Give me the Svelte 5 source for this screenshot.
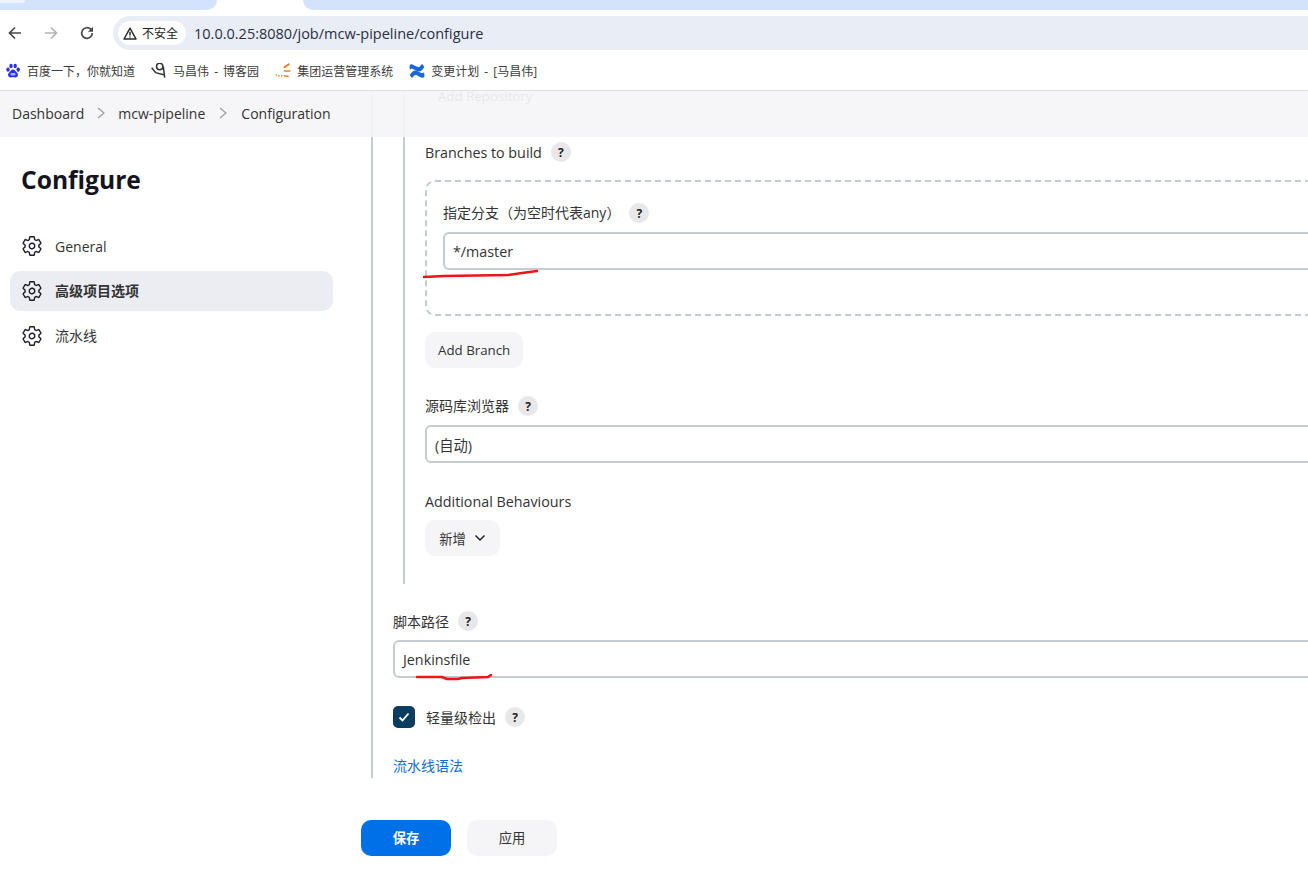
<script>
  const gear =
    "M262.29 192.31a64 64 0 1057.4 57.4 64.13 64.13 0 00-57.4-57.4zM416.39 256a154.34 154.34 0 01-1.53 20.79l45.21 35.46a10.81 10.81 0 012.45 13.75l-42.77 74a10.81 10.81 0 01-13.14 4.59l-44.9-18.08a16.11 16.11 0 00-15.17 1.75A164.48 164.48 0 01325 400.8a15.94 15.94 0 00-8.82 12.14l-6.73 47.89a11.08 11.08 0 01-10.68 9.17h-85.54a11.11 11.11 0 01-10.69-8.87l-6.72-47.82a16.07 16.07 0 00-9-12.22 155.3 155.3 0 01-21.46-12.57 16 16 0 00-15.11-1.71l-44.89 18.07a10.81 10.81 0 01-13.14-4.58l-42.77-74a10.8 10.8 0 012.45-13.75l38.21-30a16.05 16.05 0 006-14.08c-.36-4.17-.58-8.33-.58-12.5s.21-8.27.58-12.35a16 16 0 00-6.07-13.94l-38.19-30A10.81 10.81 0 0149.48 186l42.77-74a10.81 10.81 0 0113.14-4.59l44.9 18.08a16.11 16.11 0 0015.17-1.75A164.48 164.48 0 01187 111.2a15.94 15.94 0 008.82-12.14l6.73-47.89A11.08 11.08 0 01213.23 42h85.54a11.11 11.11 0 0110.69 8.87l6.72 47.82a16.07 16.07 0 009 12.22 155.3 155.3 0 0121.46 12.57 16 16 0 0015.11 1.71l44.89-18.07a10.81 10.81 0 0113.14 4.58l42.77 74a10.8 10.8 0 01-2.45 13.75l-38.21 30a16.05 16.05 0 00-6.07 14.08c.33 4.14.55 8.3.55 12.47z";

  const navItems = [
    { label: "General", active: false, cjk: false },
    { label: "高级项目选项", active: true, cjk: true },
    { label: "流水线", active: false, cjk: true }
  ];
</script>

<div class="page">
  <div class="tabstrip">
    <div class="tab-left"><span class="tab-nub"></span></div>
    <div class="tab-current"></div>
    <div class="tab-right"></div>
  </div>

  <div class="toolbar">
    <svg class="tool" viewBox="0 0 16 16" fill="none" stroke="#474747" stroke-width="1.7">
      <path d="M14 8H3M8 2.500 2.500 8 8 13.500" />
    </svg>
    <svg class="tool" viewBox="0 0 16 16" fill="none" stroke="#b4b4b4" stroke-width="1.7">
      <path d="M2 8h11M8 2.500 13.500 8 8 13.500" />
    </svg>
    <svg class="tool" viewBox="0 0 16 16" fill="none" stroke="#474747" stroke-width="1.7">
      <path d="M13.300 8a5.300 5.300 0 1 1-1.600-3.800L13 5.600" />
      <path d="M14 1.800V6.800H9Z" fill="#474747" stroke="none" />
    </svg>
    <div class="omnibox">
      <div class="chip">
        <svg width="14" height="13" viewBox="0 0 14 13" fill="none" stroke="#2b2b2b" stroke-width="1.500">
          <path d="M7 1.200 13 12H1Z" stroke-linejoin="round" />
          <path d="M7 4.800v3.800M7 9.400v1.200" />
        </svg>
        <span>不安全</span>
      </div>
      <span class="url">10.0.0.25:8080/job/mcw-pipeline/configure</span>
    </div>
  </div>

  <div class="bookmarks">
    <div class="bookmark">
      <svg width="16" height="16" viewBox="0 0 16 16" fill="#2932e1">
        <ellipse cx="3" cy="6.600" rx="1.700" ry="2.200" />
        <ellipse cx="6" cy="3" rx="1.700" ry="2.300" />
        <ellipse cx="10.200" cy="3" rx="1.700" ry="2.300" />
        <ellipse cx="13.200" cy="6.600" rx="1.700" ry="2.200" />
        <path d="M8 6.600c-2 0-2.600 2-4 3.200-1.500 1.300-1.200 4.600 1.600 4.600 1 0 1.600-.3 2.400-.3s1.500.3 2.500.3c2.800 0 3-3.300 1.500-4.600C10.600 8.600 10 6.600 8 6.600Z" />
        <rect x="5.500" y="10" width="5" height="2.600" rx="1" fill="#aab0f5" />
      </svg>
      <span>百度一下，你就知道</span>
    </div>
    <div class="bookmark">
      <svg width="16" height="16" viewBox="0 1 16 16" fill="none" stroke="#333" stroke-width="1.500">
        <circle cx="8.700" cy="4.500" r="3.200" />
        <path d="M.7 5.700 4.700 10.700 13.700 13M12.300 4.500 13.700 15.700" />
      </svg>
      <span>马昌伟 - 博客园</span>
    </div>
    <div class="bookmark">
      <svg width="16" height="16" viewBox="0 0 17 16" fill="none" stroke="#f27a1a" stroke-linecap="round">
        <path d="M10 4 14.700 .8" stroke-width="2" />
        <path d="M10 8H15.700" stroke-width="1.700" />
        <path d="M10 13 14 13.700" stroke-width="1.500" />
        <path d="M1.300 12.300h.3M4 13h.3M7 13h.3" stroke-width="1.500" />
      </svg>
      <span>集团运营管理系统</span>
    </div>
    <div class="bookmark">
      <svg width="16" height="16" viewBox="0 0 17 16" fill="#1868db">
        <path d="M.7 12.300c2.500-4 5-6 7.800-4.400l4 2c1.500.7 3 .4 3.500-.5l.5 3.800-1.500 2.300c-2.300-.6-4.300-1.800-6.200-2.800-2-1-3.200-.5-4.300 1.500L3 15.500Z" />
        <path d="M16.300 3.700c-2.500 4-5 6-7.800 4.400l-4-2C3 5.400 1.500 5.700 1 6.600L.5 2.800 2 .5c2.300.6 4.300 1.800 6.200 2.800 2 1 3.200.5 4.300-1.500L14 .5Z" />
      </svg>
      <span>变更计划 - [马昌伟]</span>
    </div>
  </div>

  <div class="content">
    <div class="breadcrumbs">
      <span>Dashboard</span>
      <svg class="crumb-sep first-sep" viewBox="0 0 10 14" fill="none" stroke="#9a9aa0" stroke-width="1.200"><path d="m2 2 6 5-6 5" /></svg>
      <span>mcw-pipeline</span>
      <svg class="crumb-sep" viewBox="0 0 10 14" fill="none" stroke="#9a9aa0" stroke-width="1.200"><path d="m2 2 6 5-6 5" /></svg>
      <span>Configuration</span>
    </div>

    <aside class="sidebar">
      <h1>Configure</h1>
      <nav>
        {#each navItems as item}
          <div class="nav-item" class:active={item.active}>
            <svg width="22" height="22" viewBox="0 0 512 512" fill="none" stroke="#1c1c28" stroke-width="32" stroke-linecap="round" stroke-linejoin="round">
              <path d={gear} />
            </svg>
            <span class:up={item.cjk}>{item.label}</span>
          </div>
        {/each}
      </nav>
    </aside>

    <main class="main">
      <div class="form">
        <div class="nested">
          <button class="btn first">Add Repository</button>

          <div class="label branches-label">Branches to build <span class="help">?</span></div>

          <div class="dashed">
            <div class="label"><span class="cjk up">指定分支（为空时代表any）</span> <span class="help">?</span></div>
            <div class="input">*/master</div>
          </div>

          <button class="btn add-branch">Add Branch</button>

          <div class="label browser-label"><span class="cjk up">源码库浏览器</span> <span class="help">?</span></div>
          <div class="input">(自动)</div>

          <div class="label behaviours-label">Additional Behaviours</div>
          <button class="btn add-new">
            新增
            <svg width="12" height="12" viewBox="0 0 12 12" fill="none" stroke="#222" stroke-width="1.500"><path d="m1.500 3.500 4.500 4.500 4.500-4.500" /></svg>
          </button>
        </div>

        <div class="label script-label"><span class="cjk">脚本路径</span> <span class="help">?</span></div>
        <div class="input">Jenkinsfile</div>

        <div class="check-row">
          <span class="checkbox">
            <svg width="12" height="12" viewBox="0 0 12 12" fill="none" stroke="#fff" stroke-width="1.800"><path d="m1.500 6.500 3 3 6-7" /></svg>
          </span>
          <span class="cjk">轻量级检出</span>
          <span class="help">?</span>
        </div>

        <div class="syntax-link">流水线语法</div>
      </div>

      <div class="actions">
        <button class="btn save">保存</button>
        <button class="btn apply">应用</button>
      </div>
    </main>
  </div>

  <svg class="scribble" width="1308" height="894" viewBox="0 0 1308 894" fill="none" stroke="#f01414" stroke-width="2.500" stroke-linecap="round" stroke-linejoin="round">
    <path d="M424 277 444 276 508 275 522 273 537 271" />
    <path d="M417 677 442 677 447 679 458 679 462 678 488 677 491 675" />
  </svg>
</div>

<style>
  :global(body) {
    margin: 0;
    overflow: hidden;
    background: #fff;
  }

  .page {
    position: relative;
    width: 1308px;
    height: 894px;
    overflow: hidden;
    font-family: "Open Sans", "Noto Sans CJK SC", sans-serif;
    font-size: 14.300px;
    color: #333;
  }

  .tabstrip {
    display: flex;
    height: 10px;
  }

  .tab-left,
  .tab-right {
    background: #d3e3fd;
  }

  .tab-left {
    width: 217px;
    border-bottom-right-radius: 10px;
  }

  .tab-nub {
    display: block;
    width: 25px;
    height: 3px;
    background: #eef3fd;
    border-bottom-right-radius: 6px;
  }

  .tab-current {
    width: 86px;
  }

  .tab-right {
    flex: 1;
    border-bottom-left-radius: 10px;
  }

  .toolbar {
    display: flex;
    align-items: center;
    height: 46px;
    padding-left: 7px;
  }

  .tool {
    width: 16px;
    height: 16px;
    margin-right: 20px;
  }

  .omnibox {
    display: flex;
    flex: 1;
    align-items: center;
    height: 34px;
    margin-left: -2px;
    padding-left: 5px;
    background: #e9edf6;
    border-radius: 17px 0 0 17px;
  }

  .chip {
    display: flex;
    align-items: center;
    gap: 5px;
    height: 24px;
    padding: 0 8px 0 5px;
    font-size: 12px;
    color: #222;
    background: #fff;
    border-radius: 12px;
  }

  .url {
    margin-left: 8px;
    font-size: 14.500px;
    color: #2a2f45;
  }

  .bookmarks {
    display: flex;
    align-items: center;
    gap: 16px;
    height: 30px;
    padding: 0 0 4px 5px;
    font-size: 12px;
    word-spacing: 2px;
    color: #3c3c3c;
    border-bottom: 1px solid #dfdfe2;
  }

  .bookmark {
    display: flex;
    align-items: center;
    gap: 6px;
  }

  .content {
    position: relative;
    display: flex;
    height: 803px;
    overflow: hidden;
  }

  .breadcrumbs {
    position: absolute;
    top: 0;
    left: 0;
    right: 0;
    z-index: 2;
    display: flex;
    align-items: center;
    height: 44px;
    padding: 0 0 2px 12px;
    font-size: 14px;
    color: #333;
    background: rgba(245, 245, 247, 0.93);
  }

  .crumb-sep {
    width: 10px;
    height: 14px;
    margin: 0 13px;
  }

  .first-sep {
    margin: 0 12px;
  }

  .sidebar {
    flex: none;
    width: 371px;
    padding: 71px 0 0 10px;
    box-sizing: border-box;
    font-size: 14px;
  }

  h1 {
    margin: 0 0 28px 11px;
    font-size: 24.600px;
    line-height: 36px;
    font-weight: 700;
    color: #14141f;
  }

  nav {
    display: flex;
    flex-direction: column;
    gap: 5px;
    width: 323px;
  }

  .nav-item {
    display: flex;
    align-items: center;
    gap: 12px;
    height: 40px;
    padding-left: 11px;
    border-radius: 10px;
  }

  .nav-item.active {
    font-weight: 700;
    background: #ecedf2;
  }

  .up {
    padding-bottom: 2px;
  }

  .cjk {
    font-size: 14px;
  }

  .main {
    flex: none;
    width: 1100px;
    margin-top: -13px;
  }

  .form {
    width: 1100px;
    height: 700px;
    padding-left: 20px;
    box-sizing: border-box;
    border-left: 2px solid #c2ccd1;
  }

  .nested {
    height: 506px;
    margin-left: 10px;
    padding-left: 20px;
    border-left: 2px solid #c2ccd1;
    margin-bottom: 27px;
  }

  .btn {
    display: flex;
    align-items: center;
    justify-content: center;
    height: 36px;
    padding: 0 13px 2px;
    box-sizing: border-box;
    font: inherit;
    font-size: 13.300px;
    color: #333;
    background: #f5f5f7;
    border: 0;
    border-radius: 10px;
  }

  .first,
  .add-branch {
    padding-bottom: 0;
  }

  .label {
    display: flex;
    align-items: center;
    gap: 9px;
    height: 20px;
  }

  .help {
    display: inline-flex;
    flex: none;
    align-items: center;
    justify-content: center;
    width: 20px;
    height: 20px;
    font-size: 12px;
    font-weight: 700;
    color: #222;
    background: #e8e8ea;
    border-radius: 50%;
  }

  .input {
    display: flex;
    align-items: center;
    height: 38px;
    padding-left: 8px;
    box-sizing: border-box;
    color: #333;
    border: 2px solid #c2ccd1;
    border-radius: 6px;
  }

  .branches-label {
    margin-top: 28px;
  }

  .dashed {
    height: 136px;
    margin-top: 18px;
    padding: 21px 0 0 16px;
    box-sizing: border-box;
    border: 2px dashed #c2ccd1;
    border-radius: 10px;
  }

  .dashed .label {
    margin-bottom: 9px;
  }

  .add-branch {
    margin-top: 16px;
  }

  .browser-label {
    margin-top: 28px;
    margin-bottom: 9px;
  }

  .behaviours-label {
    margin-top: 28px;
    margin-bottom: 9px;
  }

  .add-new {
    gap: 8px;
    width: 75px;
    padding: 0;
  }

  .script-label {
    margin-bottom: 9px;
  }

  .check-row {
    display: flex;
    align-items: center;
    gap: 11px;
    margin-top: 28px;
  }

  .check-row .help {
    margin-left: -2px;
  }

  .checkbox {
    display: flex;
    align-items: center;
    justify-content: center;
    width: 22px;
    height: 22px;
    background: #0b3d61;
    border-radius: 5px;
  }

  .syntax-link {
    margin-top: 27px;
    font-size: 14px;
    color: #0b6fd9;
  }

  .actions {
    display: flex;
    gap: 16px;
    margin: 42px 0 0 -10px;
  }

  .save,
  .apply {
    width: 90px;
    padding: 0 0 2px;
  }

  .save {
    font-weight: 700;
    color: #fff;
    background: #0070e8;
  }

  .scribble {
    position: absolute;
    top: 0;
    left: 0;
    z-index: 3;
    pointer-events: none;
  }
</style>
